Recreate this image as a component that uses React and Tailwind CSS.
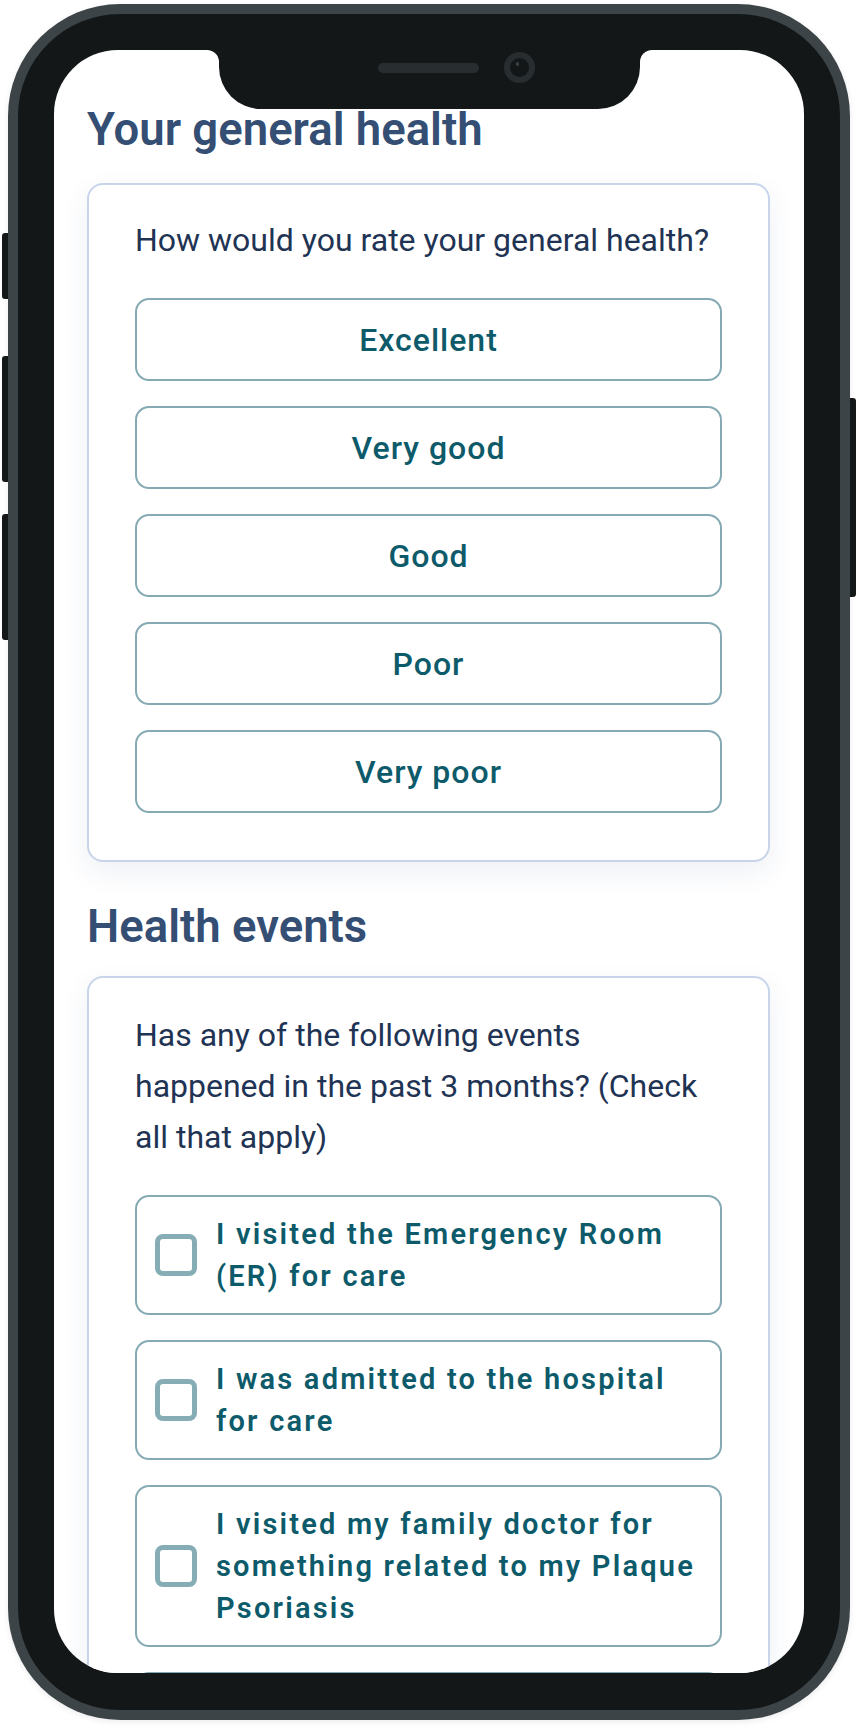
import React from 'react'

const font = { fontFamily: 'Roboto, "Noto Sans", Arial, sans-serif' }

const ratings = ['Excellent', 'Very good', 'Good', 'Poor', 'Very poor']

const events = [
  'I visited the Emergency Room (ER) for care',
  'I was admitted to the hospital for care',
  'I visited my family doctor for something related to my Plaque Psoriasis',
  'I visited a specialist for care',
]

function Heading({ children }) {
  return (
    <h2 className="text-[45.5px] leading-[53px] font-semibold text-[#344e74]">
      {children}
    </h2>
  )
}

function Card({ children }) {
  return (
    <div className="bg-white border-2 border-[#c7d4ea] rounded-[16px] shadow-[0_10px_28px_rgba(40,70,130,0.08)] px-[46px]">
      {children}
    </div>
  )
}

function RatingButton({ label }) {
  return (
    <button className="h-[83px] w-full rounded-[14px] border-2 border-[#86aab3] bg-white text-[#0d5b6a] text-[32px] font-medium tracking-[1px]">
      {label}
    </button>
  )
}

function EventOption({ label }) {
  return (
    <label className="flex items-center gap-[19px] rounded-[14px] border-2 border-[#86aab3] bg-white pl-[18px] pr-[16px] py-[16px]">
      <span className="shrink-0 w-[42px] h-[42px] rounded-[8px] border-[5px] border-[#86adb6] bg-white" />
      <span className="text-[29px] leading-[42px] font-semibold tracking-[2.2px] text-[#0d5b6a]">
        {label}
      </span>
    </label>
  )
}

export default function App() {
  return (
    <div className="w-[858px] h-[1732px] bg-white relative overflow-hidden" style={font}>
      {/* side buttons */}
      <div className="absolute left-[2px] top-[233px] w-[8px] h-[66px] bg-[#15191a] rounded-l-[3px]" />
      <div className="absolute left-[2px] top-[356px] w-[8px] h-[126px] bg-[#15191a] rounded-l-[3px]" />
      <div className="absolute left-[2px] top-[514px] w-[8px] h-[126px] bg-[#15191a] rounded-l-[3px]" />
      <div className="absolute left-[848px] top-[398px] w-[8px] h-[199px] bg-[#15191a] rounded-r-[3px]" />

      {/* phone frame */}
      <div className="ml-[8px] mt-[4px] w-[842px] h-[1716px] rounded-[112px] bg-[#3d4448] p-[10px] shadow-[0_2px_6px_rgba(0,0,0,0.08)] relative">
        <div className="w-full h-full rounded-[102px] bg-[#131718] pt-[36px] pb-[37px] px-[36px]">
          <div className="relative w-full h-full rounded-[64px] bg-white overflow-hidden">
            {/* notch */}
            <div className="absolute left-[165px] top-0 w-[421px] h-[59px] bg-[#131718] rounded-b-[42px] z-10">
              <div className="absolute left-[159px] top-[13px] w-[101px] h-[10px] rounded-full bg-[#282d30]" />
              <div className="absolute left-[285px] top-[2px] w-[31px] h-[31px] rounded-full border-[6px] border-[#282d30] bg-[#131718]">
                <div className="absolute left-[6px] top-[4px] w-[3px] h-[4px] rounded-full bg-[#3a4045]" />
              </div>
            </div>
            <div className="absolute left-[153px] top-0 w-[12px] h-[12px] bg-[#131718] z-10">
              <div className="w-full h-full bg-white rounded-tr-[12px]" />
            </div>
            <div className="absolute left-[586px] top-0 w-[12px] h-[12px] bg-[#131718] z-10">
              <div className="w-full h-full bg-white rounded-tl-[12px]" />
            </div>

            {/* scrolled content */}
            <div className="pl-[33px] pr-[34px] pt-[53px]">
              <Heading>Your general health</Heading>
              <div className="mt-[27px]">
                <Card>
                  <p className="pt-[30px] text-[32px] leading-[51px] text-[#1f3454]">
                    How would you rate your general health?
                  </p>
                  <div className="mt-[32px] pb-[47px] flex flex-col gap-[25px]">
                    {ratings.map((r) => (
                      <RatingButton key={r} label={r} />
                    ))}
                  </div>
                </Card>
              </div>

              <div className="mt-[38px]">
                <Heading>Health events</Heading>
              </div>
              <div className="mt-[23px]">
                <Card>
                  <p className="pt-[32px] max-w-[570px] text-[32px] leading-[51px] text-[#1f3454]">
                    Has any of the following events
                    <br />
                    happened in the past 3 months? (Check all that apply)
                  </p>
                  <div className="mt-[32px] pb-[45px] flex flex-col gap-[25px]">
                    {events.map((e) => (
                      <EventOption key={e} label={e} />
                    ))}
                  </div>
                </Card>
              </div>
            </div>
          </div>
        </div>
      </div>
    </div>
  )
}
